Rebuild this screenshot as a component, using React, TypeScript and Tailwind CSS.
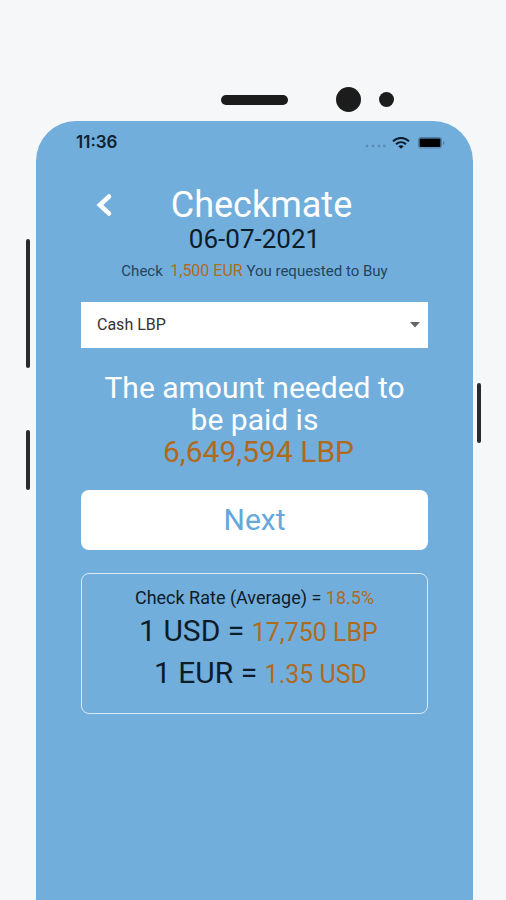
import { useState } from "react";

function StatusBar() {
  return (
    <div className="flex h-5 items-center justify-between pr-7 pl-10 font-['Inter',sans-serif]">
      <span className="text-[17px] font-semibold text-[#10222f]">11:36</span>
      <div className="flex items-center">
        <svg width="21" height="12" viewBox="0 0 21 12" fill="#5a8fb8" aria-hidden="true">
          <circle cx="2" cy="9" r="1.4" />
          <circle cx="8" cy="9" r="1.4" />
          <circle cx="14" cy="9" r="1.4" />
          <circle cx="19.4" cy="9" r="1.4" />
        </svg>
        <svg className="ml-1.5" width="18" height="12" viewBox="0 0 18 12" fill="none" stroke="#0a1a26" strokeWidth="2" aria-hidden="true">
          <path d="M1 4.4C5.5 0 12.500 0 17 4.400" />
          <path d="M4 7.300C7 4.500 11 4.500 14 7.300" />
          <path d="M9 11.800 6.300 9.200C7.800 7.900 10.200 7.900 11.700 9.200Z" fill="#0a1a26" stroke="none" />
        </svg>
        <svg className="ml-2" width="27" height="12" viewBox="0 0 27 12" aria-hidden="true">
          <rect x="0.500" y="0.500" width="23" height="10.500" rx="2" fill="none" stroke="#4f7fa3" />
          <rect x="1.500" y="1.500" width="21" height="8.500" rx="1" fill="#000" />
          <path d="M25 4v4c2-.8 2-3.200 0-4Z" fill="#4f7fa3" />
        </svg>
      </div>
    </div>
  );
}

function Amount({ children, className = "" }: { children: string; className?: string }) {
  return <span className={`text-[#b06a1c] ${className}`}>{children}</span>;
}

export default function App() {
  const [method, setMethod] = useState("Cash LBP");

  return (
    <div className="flex min-h-screen flex-col bg-[#f6f7f8] font-['Roboto',sans-serif] text-[#0c1c28]">
      <div className="flex items-center justify-end pt-[87px] pr-28 pb-[9px]">
        <span className="h-2.5 w-[67px] rounded-full bg-[#1c1c1c]" />
        <span className="ml-12 size-[25px] rounded-full bg-[#1c1c1c]" />
        <span className="ml-[18px] size-[15px] rounded-full bg-[#1c1c1c]" />
      </div>

      <div className="flex flex-1">
        <div className="flex w-9 shrink-0 flex-col items-end gap-[62px] pt-[118px] pr-1.5">
          <span className="h-[129px] w-1 rounded-full bg-[#2a2a2a]" />
          <span className="h-[60px] w-1 rounded-full bg-[#2a2a2a]" />
        </div>

        <main className="min-w-0 flex-1 rounded-t-[40px] bg-[#72aedc] pt-3">
          <StatusBar />
          <div className="px-[45px] pt-8">
            <header className="grid grid-cols-[48px_1fr_34px] items-center">
              <button type="button" aria-label="Back" className="flex h-10 items-center pl-3.5">
                <svg width="18" height="24" viewBox="0 0 18 24" fill="none" stroke="#fff" strokeWidth="4.500" strokeLinecap="round" aria-hidden="true">
                  <path d="M14 3.500 4.800 12l9.200 8.500" />
                </svg>
              </button>
              <h1 className="text-center text-4xl leading-10 text-white">Checkmate</h1>
            </header>
            <p className="text-center text-[26px] leading-7">06-07-2021</p>
            <p className="mt-2 text-center text-[15px] leading-5 text-[#23445c]">
              Check&nbsp; <Amount className="text-base leading-5">1,500 EUR</Amount> You requested to Buy
            </p>

            <div className="relative mt-[21px]">
              <select
                aria-label="Payment method"
                value={method}
                onChange={(e) => setMethod(e.target.value)}
                className="h-[46px] w-full appearance-none bg-white px-4 text-base text-[#333]"
              >
                <option>Cash LBP</option>
                <option>Cash USD</option>
              </select>
              <svg className="pointer-events-none absolute top-5 right-2" width="10" height="6" viewBox="0 0 10 6" aria-hidden="true">
                <path d="M0 0h10L5 5.500Z" fill="#666" />
              </svg>
            </div>

            <p className="mt-6 px-4 text-center text-3xl leading-8 text-white">
              The amount needed to be paid is
              <Amount className="block pl-2">6,649,594 LBP</Amount>
            </p>

            <button type="button" className="mt-[22px] h-[60px] w-full rounded-lg bg-white text-3xl text-[#65a8da]">
              Next
            </button>

            <section className="mt-[23px] rounded-lg border border-[#d9eaf7] pt-3 pb-[19px] text-center">
              <p className="text-lg leading-6">
                Check Rate (Average) = <Amount>18.5%</Amount>
              </p>
              <p className="pl-2 text-3xl leading-[42px]">
                1 USD = <Amount className="text-[25px] leading-8">17,750 LBP</Amount>
              </p>
              <p className="pl-3 text-3xl leading-[42px]">
                1 EUR = <Amount className="text-[25px] leading-8">1.35 USD</Amount>
              </p>
            </section>
          </div>
        </main>

        <div className="flex w-[33px] shrink-0 flex-col pt-[262px] pl-1">
          <span className="h-[60px] w-1 rounded-full bg-[#2a2a2a]" />
        </div>
      </div>
    </div>
  );
}
